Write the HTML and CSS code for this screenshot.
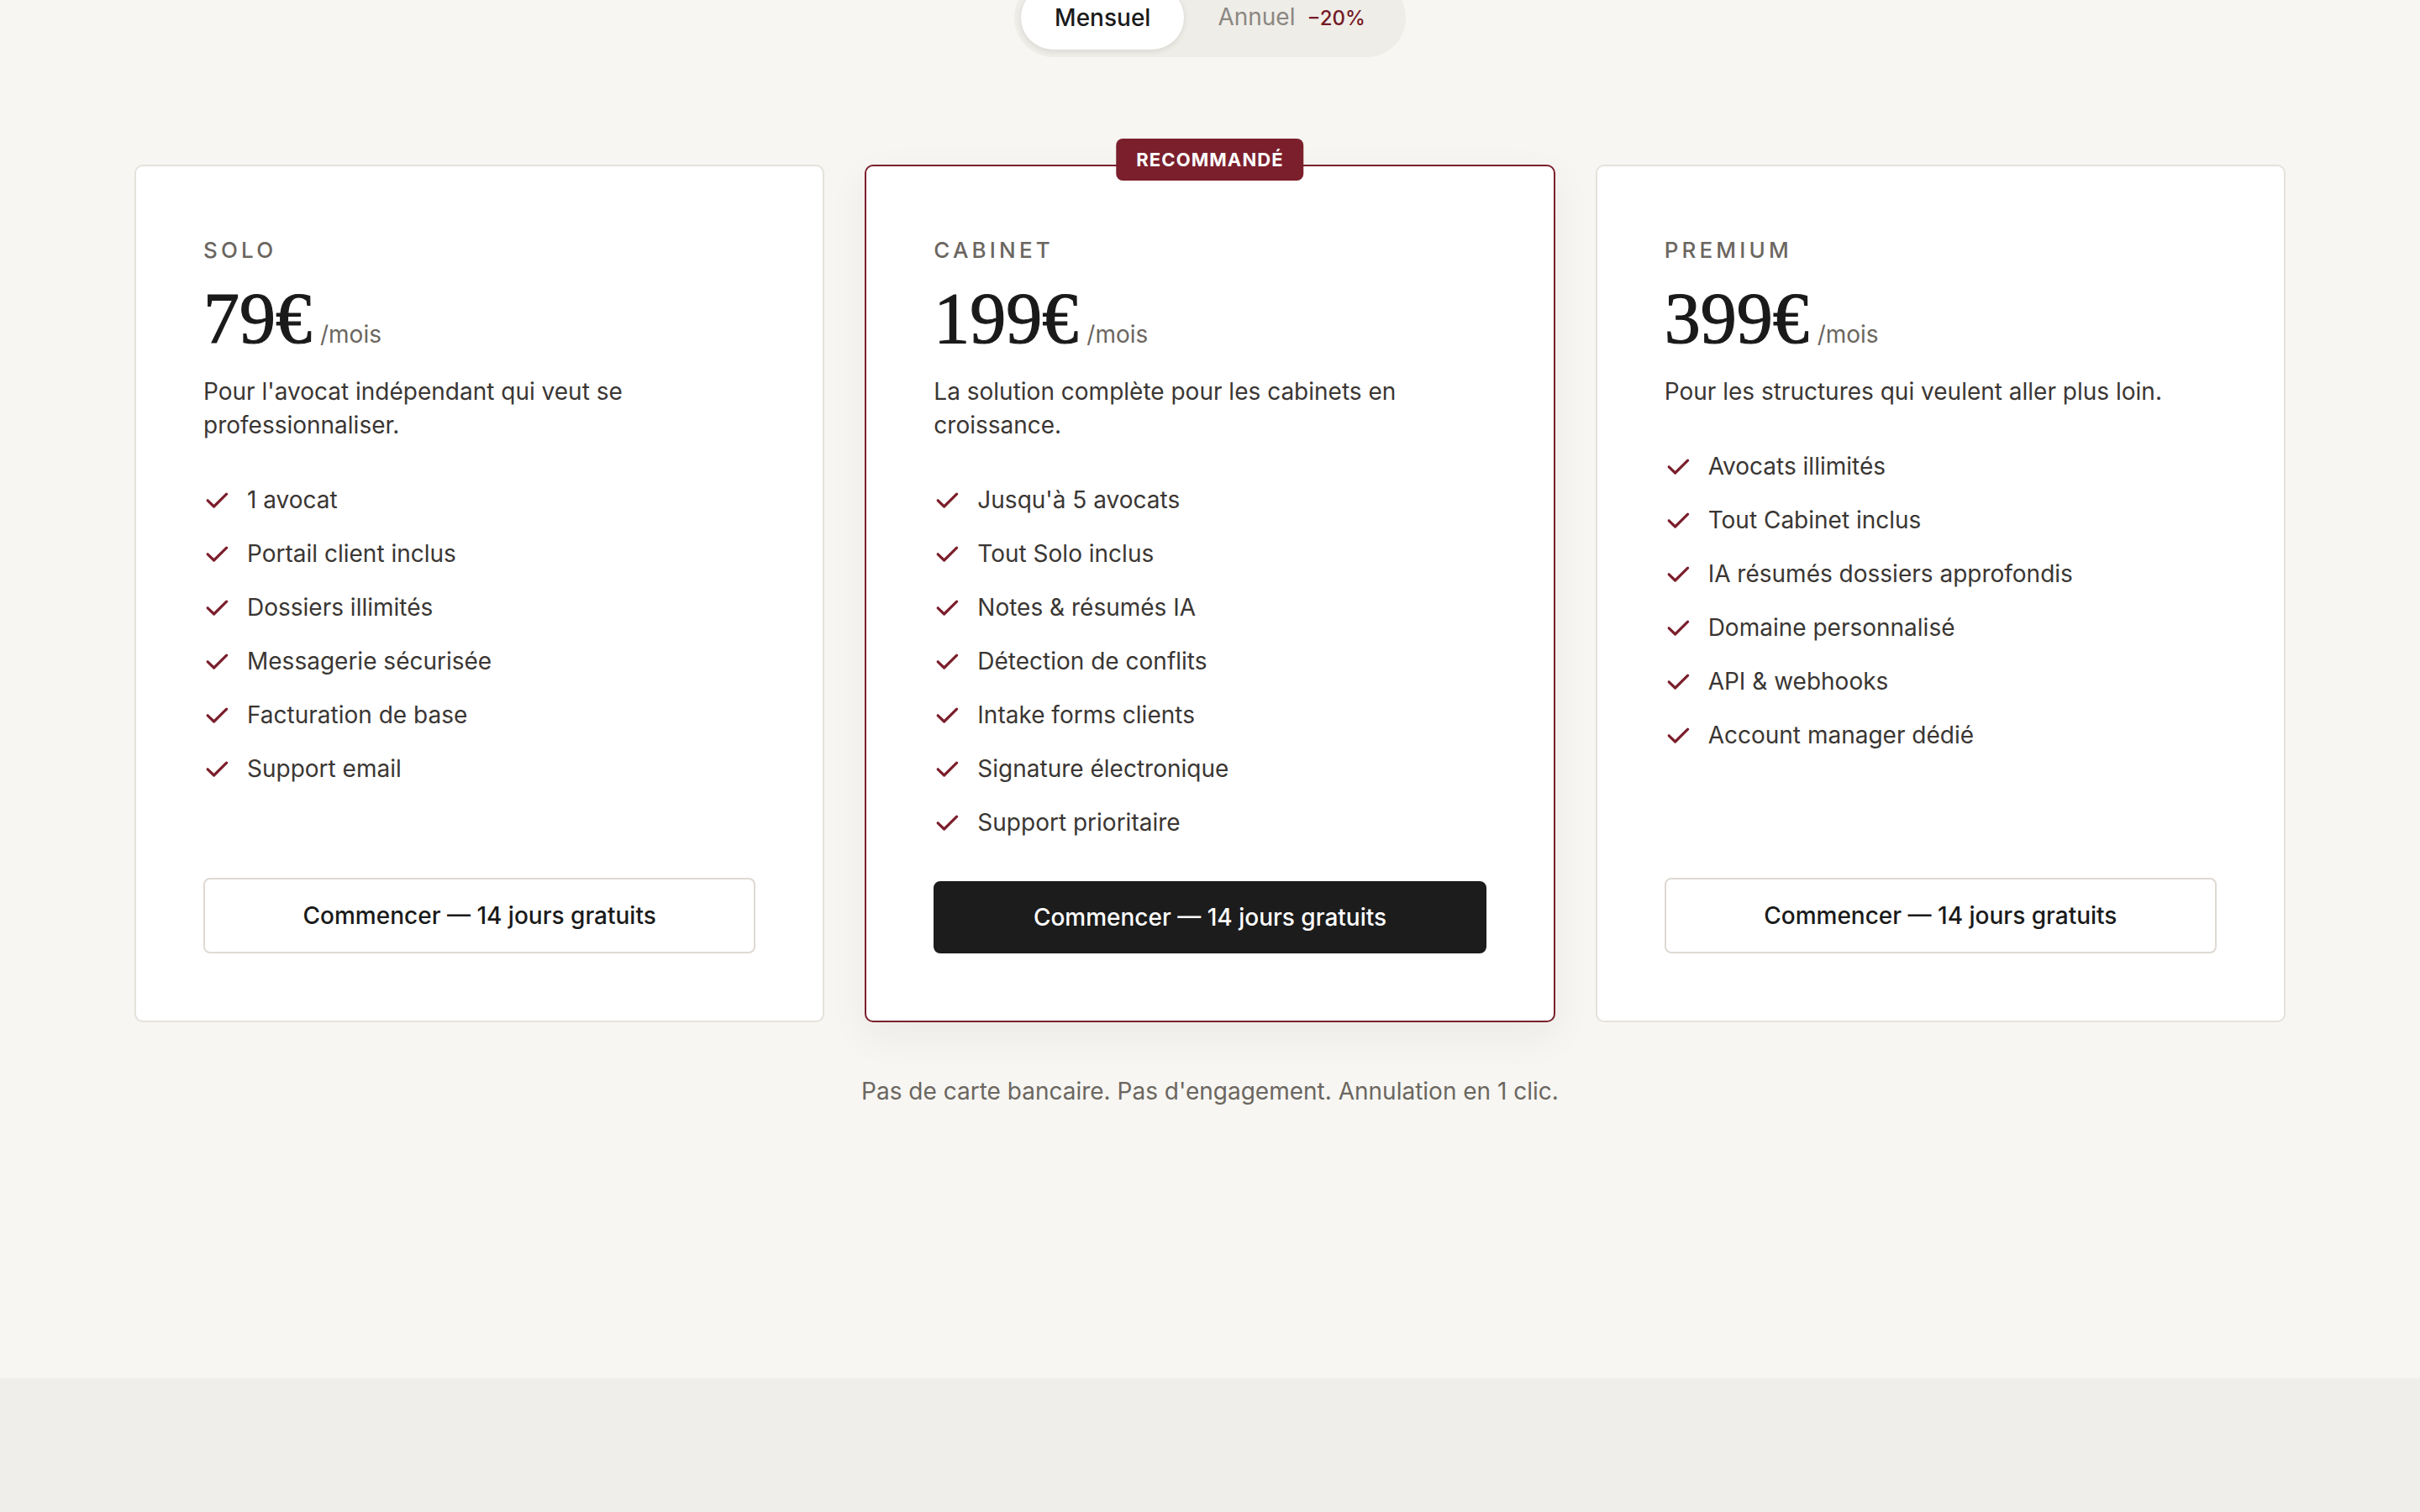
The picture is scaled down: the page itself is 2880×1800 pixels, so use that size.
FILE: index.html
```html
<!DOCTYPE html>
<html lang="fr">
<head>
<meta charset="utf-8">
<meta name="viewport" content="width=device-width, initial-scale=1">
<title>Tarifs</title>
<link rel="stylesheet" href="styles.css">
</head>
<body>
<main class="pricing">
  <div class="toggle-wrap">
    <div class="toggle">
      <button class="toggle-btn is-active">Mensuel</button>
      <button class="toggle-btn">Annuel <span class="discount">−20%</span></button>
    </div>
  </div>

  <div class="plans">
    <article class="plan">
      <h3 class="plan-name">SOLO</h3>
      <div class="price"><span class="amount">79€</span><span class="period">/mois</span></div>
      <p class="plan-desc">Pour l'avocat indépendant qui veut se professionnaliser.</p>
      <ul class="features">
        <li><svg class="check" viewBox="0 0 16 16"><path d="M2.6 8.4l3.7 3.6L13.8 4.6"/></svg>1 avocat</li>
        <li><svg class="check" viewBox="0 0 16 16"><path d="M2.6 8.4l3.7 3.6L13.8 4.6"/></svg>Portail client inclus</li>
        <li><svg class="check" viewBox="0 0 16 16"><path d="M2.6 8.4l3.7 3.6L13.8 4.6"/></svg>Dossiers illimités</li>
        <li><svg class="check" viewBox="0 0 16 16"><path d="M2.6 8.4l3.7 3.6L13.8 4.6"/></svg>Messagerie sécurisée</li>
        <li><svg class="check" viewBox="0 0 16 16"><path d="M2.6 8.4l3.7 3.6L13.8 4.6"/></svg>Facturation de base</li>
        <li><svg class="check" viewBox="0 0 16 16"><path d="M2.6 8.4l3.7 3.6L13.8 4.6"/></svg>Support email</li>
      </ul>
      <a class="cta" href="#">Commencer — 14 jours gratuits</a>
    </article>

    <article class="plan plan-featured">
      <span class="badge">RECOMMANDÉ</span>
      <h3 class="plan-name">CABINET</h3>
      <div class="price"><span class="amount">199€</span><span class="period">/mois</span></div>
      <p class="plan-desc">La solution complète pour les cabinets en croissance.</p>
      <ul class="features">
        <li><svg class="check" viewBox="0 0 16 16"><path d="M2.6 8.4l3.7 3.6L13.8 4.6"/></svg>Jusqu'à 5 avocats</li>
        <li><svg class="check" viewBox="0 0 16 16"><path d="M2.6 8.4l3.7 3.6L13.8 4.6"/></svg>Tout Solo inclus</li>
        <li><svg class="check" viewBox="0 0 16 16"><path d="M2.6 8.4l3.7 3.6L13.8 4.6"/></svg>Notes &amp; résumés IA</li>
        <li><svg class="check" viewBox="0 0 16 16"><path d="M2.6 8.4l3.7 3.6L13.8 4.6"/></svg>Détection de conflits</li>
        <li><svg class="check" viewBox="0 0 16 16"><path d="M2.6 8.4l3.7 3.6L13.8 4.6"/></svg>Intake forms clients</li>
        <li><svg class="check" viewBox="0 0 16 16"><path d="M2.6 8.4l3.7 3.6L13.8 4.6"/></svg>Signature électronique</li>
        <li><svg class="check" viewBox="0 0 16 16"><path d="M2.6 8.4l3.7 3.6L13.8 4.6"/></svg>Support prioritaire</li>
      </ul>
      <a class="cta cta-dark" href="#">Commencer — 14 jours gratuits</a>
    </article>

    <article class="plan">
      <h3 class="plan-name">PREMIUM</h3>
      <div class="price"><span class="amount">399€</span><span class="period">/mois</span></div>
      <p class="plan-desc">Pour les structures qui veulent aller plus loin.</p>
      <ul class="features">
        <li><svg class="check" viewBox="0 0 16 16"><path d="M2.6 8.4l3.7 3.6L13.8 4.6"/></svg>Avocats illimités</li>
        <li><svg class="check" viewBox="0 0 16 16"><path d="M2.6 8.4l3.7 3.6L13.8 4.6"/></svg>Tout Cabinet inclus</li>
        <li><svg class="check" viewBox="0 0 16 16"><path d="M2.6 8.4l3.7 3.6L13.8 4.6"/></svg>IA résumés dossiers approfondis</li>
        <li><svg class="check" viewBox="0 0 16 16"><path d="M2.6 8.4l3.7 3.6L13.8 4.6"/></svg>Domaine personnalisé</li>
        <li><svg class="check" viewBox="0 0 16 16"><path d="M2.6 8.4l3.7 3.6L13.8 4.6"/></svg>API &amp; webhooks</li>
        <li><svg class="check" viewBox="0 0 16 16"><path d="M2.6 8.4l3.7 3.6L13.8 4.6"/></svg>Account manager dédié</li>
      </ul>
      <a class="cta" href="#">Commencer — 14 jours gratuits</a>
    </article>
  </div>

  <p class="note">Pas de carte bancaire. Pas d'engagement. Annulation en 1 clic.</p>
</main>
<footer class="band"></footer>
</body>
</html>
```

FILE: styles.css
```css
* { box-sizing: border-box; }

html, body {
  margin: 0;
  padding: 0;
}

body {
  min-height: 100vh;
  display: flex;
  flex-direction: column;
  background: #f7f6f2;
  font-family: Inter, "Noto Sans", "Liberation Sans", sans-serif;
  color: #3a3633;
  -webkit-font-smoothing: antialiased;
  overflow: hidden;
}

.pricing {
  width: 100%;
  max-width: 2560px;
  margin: 0 auto;
  padding-bottom: 322px;
}

.toggle-wrap {
  display: flex;
  justify-content: center;
  margin-top: -26px;
}

.toggle {
  display: flex;
  align-items: center;
  padding: 8px;
  background: #efede8;
  border-radius: 999px;
}

.toggle-btn {
  font-family: inherit;
  font-size: 28px;
  line-height: 44px;
  font-weight: 400;
  padding: 16px 40px;
  border: 0;
  border-radius: 999px;
  background: transparent;
  color: #8c8782;
  display: flex;
  align-items: baseline;
  gap: 14px;
  cursor: pointer;
}

.toggle-btn.is-active {
  background: #ffffff;
  color: #1a1a1a;
  font-weight: 500;
  box-shadow: 0 2px 6px rgba(60, 50, 40, 0.12);
}

.discount {
  font-size: 24px;
  font-weight: 500;
  color: #741a27;
}

.plans {
  display: grid;
  grid-template-columns: repeat(3, 1fr);
  gap: 48px;
  margin-top: 128px;
}

.plan {
  position: relative;
  display: flex;
  flex-direction: column;
  background: #ffffff;
  border: 2px solid #e5e2db;
  border-radius: 10px;
  padding: 80px;
}

.plan-featured {
  border-color: #7b1f2c;
  box-shadow: 0 16px 48px rgba(60, 40, 30, 0.06);
}

.badge {
  position: absolute;
  top: -33px;
  left: 50%;
  transform: translateX(-50%);
  height: 50px;
  padding: 0 24px;
  display: flex;
  align-items: center;
  background: #7b1f2c;
  color: #ffffff;
  font-size: 22px;
  font-weight: 700;
  letter-spacing: 0.05em;
  border-radius: 8px;
  white-space: nowrap;
}

.plan-name {
  margin: 0;
  font-size: 26px;
  line-height: 40px;
  font-weight: 500;
  letter-spacing: 0.16em;
  color: #6b6660;
}

.price {
  display: flex;
  align-items: baseline;
  gap: 10px;
  margin: 18px 0 24px;
}

.amount {
  font-family: "Liberation Serif", "Times New Roman", serif;
  font-size: 86px;
  line-height: 86px;
  color: #1a1a1a;
  -webkit-text-stroke: 1.2px #1a1a1a;
}

.period {
  font-size: 28px;
  color: #6b6660;
}

.plan-desc {
  margin: 0;
  font-size: 28px;
  line-height: 40px;
  color: #3a3633;
}

.features {
  list-style: none;
  margin: 47px 0 48px;
  padding: 0;
  display: flex;
  flex-direction: column;
  gap: 20px;
}

.features li {
  display: flex;
  align-items: center;
  gap: 20px;
  font-size: 28px;
  line-height: 44px;
  color: #3a3633;
}

.check {
  width: 32px;
  height: 32px;
  flex: none;
  fill: none;
  stroke: #7b1f2c;
  stroke-width: 1.6;
  stroke-linecap: round;
  stroke-linejoin: round;
}

.cta {
  margin-top: auto;
  display: flex;
  align-items: center;
  justify-content: center;
  height: 90px;
  border: 2px solid #dedad2;
  border-radius: 8px;
  background: #ffffff;
  color: #1a1a1a;
  font-size: 28px;
  font-weight: 500;
  text-decoration: none;
}

.cta-dark {
  height: 86px;
  background: #1c1c1c;
  border-color: #1c1c1c;
  color: #ffffff;
}

.note {
  margin: 62px 0 0;
  text-align: center;
  font-size: 28px;
  line-height: 40px;
  color: #6b6660;
}

.band {
  flex: 1;
  min-height: 160px;
  background: #efeeea;
}
```
